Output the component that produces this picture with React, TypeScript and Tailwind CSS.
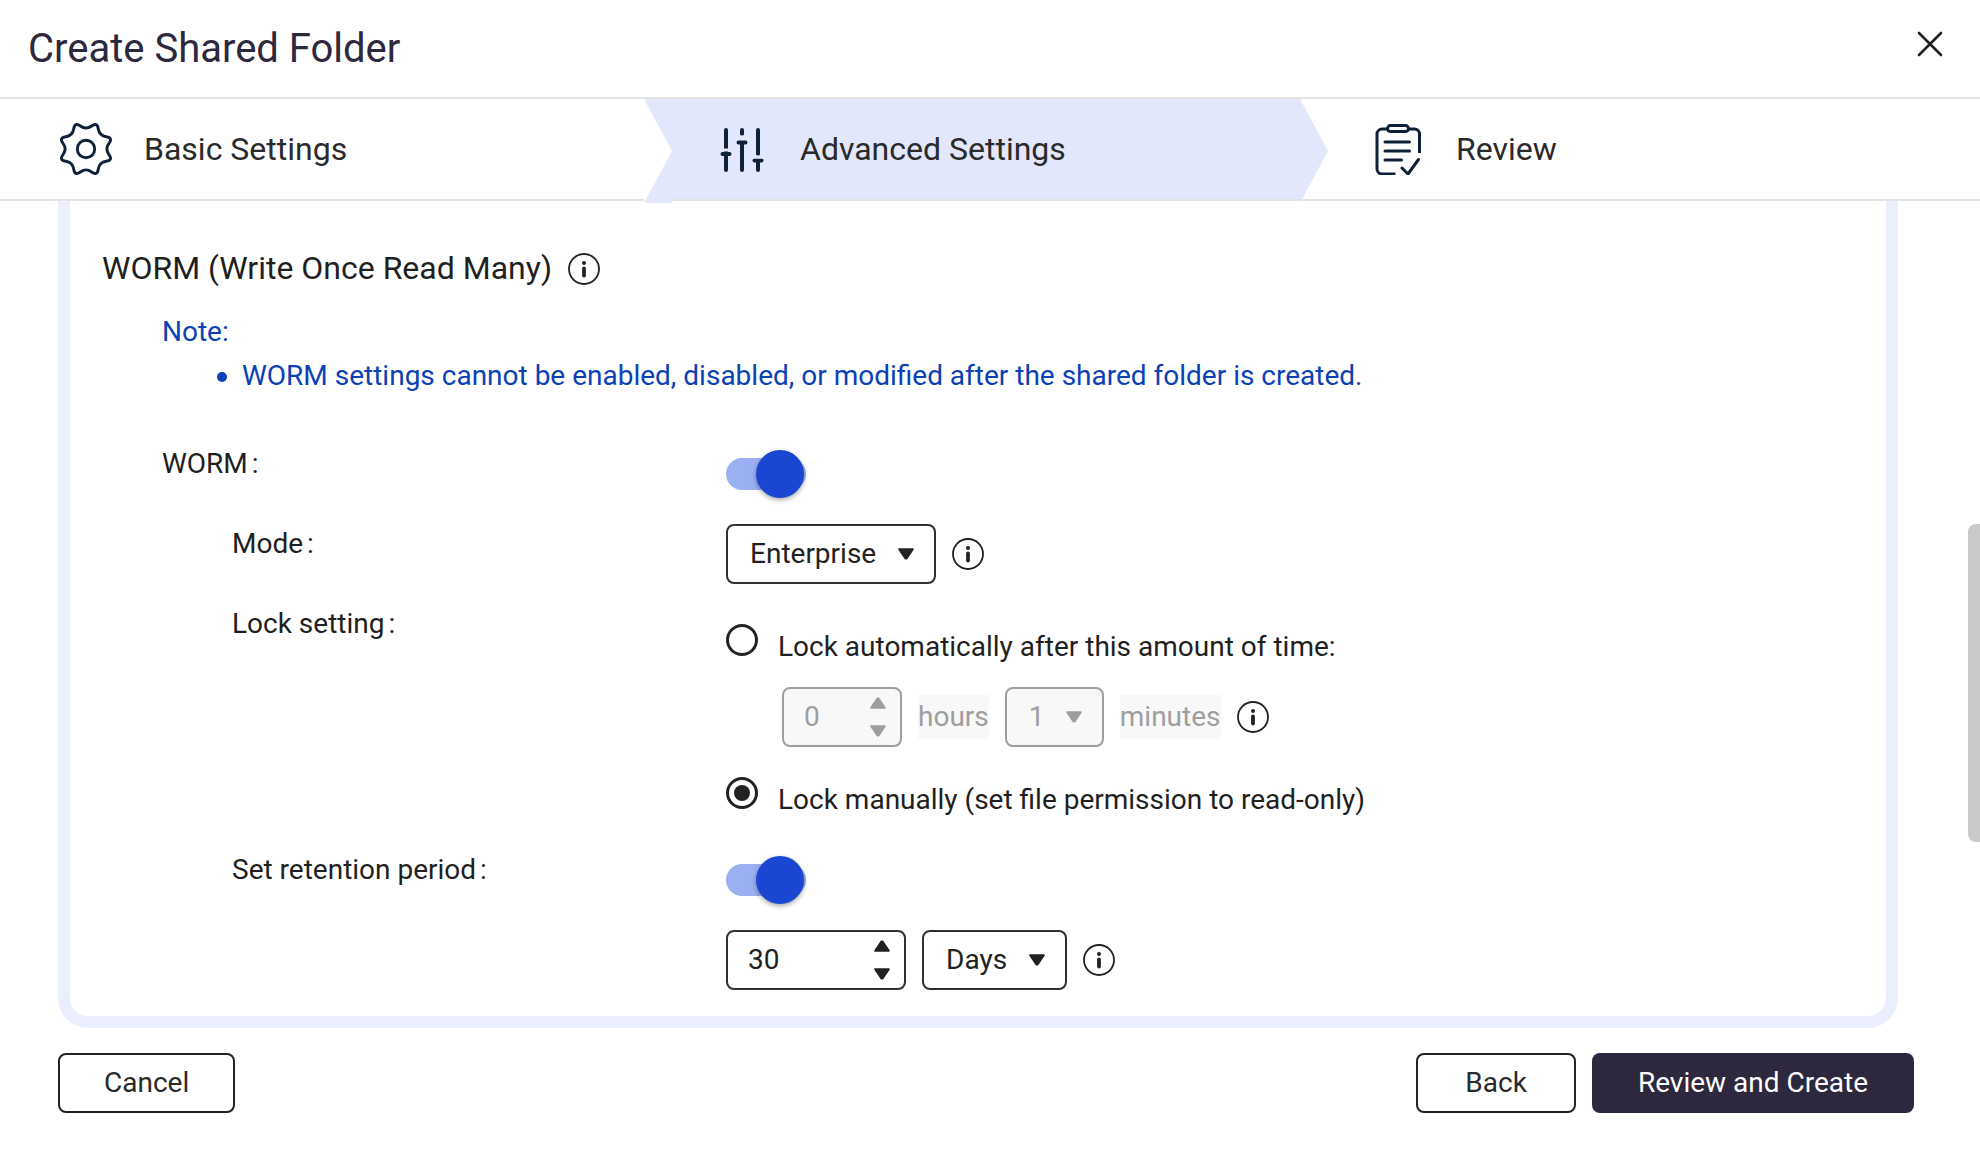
import { useState, type ReactNode } from "react";

const NAVY = "#0f2138";

function gearPath(cx: number, cy: number, outer: number, inner: number) {
  const points = Array.from({ length: 16 }, (_, i) => {
    const angle = (i * Math.PI) / 8;
    const radius = i % 2 ? outer : inner;
    return [cx + radius * Math.sin(angle), cy - radius * Math.cos(angle)];
  });
  const mid = (i: number) => {
    const a = points[i % 16];
    const b = points[(i + 1) % 16];
    return `${((a[0] + b[0]) / 2).toFixed(2)} ${((a[1] + b[1]) / 2).toFixed(2)}`;
  };
  let d = `M${mid(15)}`;
  points.forEach((p, i) => {
    d += `Q${p[0].toFixed(2)} ${p[1].toFixed(2)} ${mid(i)}`;
  });
  return d + "Z";
}

function GearIcon() {
  return (
    <svg aria-hidden="true" className="size-[52px]" viewBox="0 0 52 52" fill="none" stroke={NAVY} strokeWidth="2.9">
      <path d={gearPath(26, 26, 29.4, 18.8)} />
      <circle cx="26" cy="26" r="8.7" />
    </svg>
  );
}

function SlidersIcon() {
  return (
    <svg aria-hidden="true" className="size-[52px]" viewBox="0 -1 52 52" fill="none" stroke={NAVY} strokeWidth="4" strokeLinecap="round">
      <path d="M10 6v22" />
      <path d="M10 30v16M6.500 30h7" />
      <path d="M26 6v4M26 19v27M22.500 18.500h7" />
      <path d="M42 6v24M42 38v8M38.500 36.500h7" />
      <path d="M3 26h14M18 13h16M35 33h14" stroke="#e2e7fb" strokeWidth="3" strokeLinecap="butt" />
    </svg>
  );
}

function ClipboardIcon() {
  return (
    <svg
      aria-hidden="true"
      className="size-[52px]"
      viewBox="-2 0 52 52"
      fill="none"
      stroke={NAVY}
      strokeWidth="3"
      strokeLinejoin="round"
    >
      <path d="M14 6H8a5 5 0 0 0-5 5v35a5 5 0 0 0 5 5h13.500M34 6h6.500a5 5 0 0 1 5 5v19" />
      <rect x="13.500" y="2.600" width="21" height="6" rx="3" />
      <path d="M11 19H35.500M11 28H35.500M11 37h16.500M28 45l6 6L44.500 36.500" strokeLinecap="round" />
    </svg>
  );
}

function InfoButton({ label }: { label: string }) {
  return (
    <button type="button" aria-label={label} className="size-8 shrink-0 text-[#222222]">
      <svg aria-hidden="true" className="size-8" viewBox="0 0 32 32" fill="none" stroke="currentColor">
        <circle cx="16" cy="16" r="15" strokeWidth="1.8" />
        <path d="M16 15.500v7" strokeWidth="3.800" strokeLinecap="round" />
        <circle cx="16" cy="10" r="2" fill="currentColor" stroke="none" />
      </svg>
    </button>
  );
}

function Caret({ up = false }: { up?: boolean }) {
  return (
    <svg aria-hidden="true" className="h-3 w-4" viewBox="0 0 16 12" fill="currentColor" stroke="currentColor" strokeWidth="2" strokeLinejoin="round">
      <path d={up ? "M1.200 10.800h13.600L8.600 1.500h-1.200Z" : "M1.200 1.200h13.600L8.600 10.500h-1.200Z"} />
    </svg>
  );
}

function Dropdown({ label, options, width, disabled = false }: { label: string; options: string[]; width: string; disabled?: boolean }) {
  return (
    <div className={`relative ${width} ${disabled ? "text-[#9e9e9e]" : "text-[#222222]"}`}>
      <select
        aria-label={label}
        disabled={disabled}
        className="h-15 w-full appearance-none rounded-lg border-2 border-[#303030] bg-white pl-[22px] disabled:border-[#9e9e9e] disabled:bg-[#f8f8f8] disabled:opacity-100"
      >
        {options.map((option) => (
          <option key={option}>{option}</option>
        ))}
      </select>
      <span className="pointer-events-none absolute inset-y-0 right-[22px] flex items-center">
        <Caret />
      </span>
    </div>
  );
}

function NumberBox({ label, initial, width, disabled = false }: { label: string; initial: number; width: string; disabled?: boolean }) {
  const [value, setValue] = useState(initial);
  return (
    <div
      className={`flex h-15 rounded-lg border-2 ${width} ${
        disabled ? "border-[#9e9e9e] bg-[#f8f8f8] text-[#9e9e9e]" : "border-[#303030] bg-white text-[#222222]"
      }`}
    >
      <input
        type="text"
        inputMode="numeric"
        aria-label={label}
        disabled={disabled}
        value={value}
        onChange={(e) => setValue(Number(e.target.value) || 0)}
        className="w-full min-w-0 flex-1 bg-transparent pl-5 outline-none"
      />
      <div className="mr-3.5 flex flex-col justify-center gap-4">
        <button type="button" aria-label={`Increase ${label}`} disabled={disabled} onClick={() => setValue(value + 1)}>
          <Caret up />
        </button>
        <button type="button" aria-label={`Decrease ${label}`} disabled={disabled} onClick={() => setValue(Math.max(0, value - 1))}>
          <Caret />
        </button>
      </div>
    </div>
  );
}

function Toggle({ id }: { id: string }) {
  return (
    <span className="relative flex h-15 w-20 items-center">
      <input
        id={id}
        type="checkbox"
        role="switch"
        defaultChecked
        className="peer h-8 w-20 cursor-pointer appearance-none rounded-full bg-gray-300 checked:bg-[#9bb0f2]"
      />
      <span className="pointer-events-none absolute top-1.5 left-0 size-12 rounded-full bg-white shadow-[0_2px_5px_rgba(0,0,0,0.35)] peer-checked:left-[30px] peer-checked:bg-[#1a46d2]" />
    </span>
  );
}

function Radio({ id, label, checked, onSelect }: { id: string; label: string; checked: boolean; onSelect: () => void }) {
  return (
    <div className="flex items-start gap-5">
      <input
        id={id}
        type="radio"
        name="lock"
        checked={checked}
        onChange={onSelect}
        className="size-8 shrink-0 appearance-none rounded-full border-3 border-[#222222] bg-white bg-clip-content p-[5px] checked:bg-[#222222]"
      />
      <label htmlFor={id} className="leading-[46px]">
        {label}
      </label>
    </div>
  );
}

function Row({ label, htmlFor, indent = false, children }: { label: string; htmlFor?: string; indent?: boolean; children: ReactNode }) {
  const text = (
    <>
      {label}
      <span className="ml-1">:</span>
    </>
  );
  const style = `leading-10 ${indent ? "pl-[70px]" : ""}`;
  return (
    <div className="grid grid-cols-[564px_1fr] items-start">
      {htmlFor ? (
        <label htmlFor={htmlFor} className={style}>
          {text}
        </label>
      ) : (
        <div className={style}>{text}</div>
      )}
      <div>{children}</div>
    </div>
  );
}

function Step({ icon, label, className = "", current = false, children }: { icon: ReactNode; label: string; className?: string; current?: boolean; children?: ReactNode }) {
  return (
    <li className={`relative flex h-[100px] items-center ${className}`} aria-current={current ? "step" : undefined}>
      {children}
      <button type="button" className="relative flex items-center gap-8 text-[32px]">
        {icon}
        <span className="leading-10">{label}</span>
      </button>
    </li>
  );
}

export default function App() {
  const [lock, setLock] = useState("manual");

  return (
    <div className="relative flex min-h-screen flex-col bg-white font-['Roboto',sans-serif] text-[28px] text-[#1f1f1f]">
      <header className="flex h-[99px] items-center justify-between border-b-2 border-[#e3e3e3] pr-[37px] pl-7">
        <h1 className="text-[40px] leading-12 text-[#2d283e]">Create Shared Folder</h1>
        <button type="button" aria-label="Close" className="mb-2.5 text-[#222222]">
          <svg aria-hidden="true" className="size-[26px]" viewBox="0 0 26 26" fill="none" stroke="currentColor" strokeWidth="2.6" strokeLinecap="round">
            <path d="M2 2l22 22M24 2L2 24" />
          </svg>
        </button>
      </header>

      <nav aria-label="Steps" className="relative z-10 border-b-2 border-[#e3e3e3]">
        <ol className="grid grid-cols-[644fr_656fr_680fr] text-[#2a2a2a]">
          <Step icon={<GearIcon />} label="Basic Settings" className="pl-[60px]" />
          <Step icon={<SlidersIcon />} label="Advanced Settings" className="bg-[#e2e7fb] pl-[72px]" current>
            <svg aria-hidden="true" className="absolute top-0 left-0 h-[104px] w-7" viewBox="0 0 28 104">
              <path d="M0 0h28v104H0Z" fill="#e2e7fb" />
              <path d="M0 0L28 52L0 104Z" fill="#ffffff" />
            </svg>
          </Step>
          <Step icon={<ClipboardIcon />} label="Review" className="pl-[72px]">
            <svg aria-hidden="true" className="absolute top-0 left-0 h-[104px] w-7" viewBox="0 0 28 104">
              <path d="M0 0L28 52L0 104Z" fill="#e2e7fb" />
            </svg>
          </Step>
        </ol>
      </nav>

      <main className="mr-[82px] ml-[58px] rounded-b-[30px] border-x-12 border-b-12 border-[#ebeefc] px-8 pt-[50px] pb-[26px]">
        <div className="flex items-end gap-4">
          <h2 className="text-[32px] leading-[34px]">WORM (Write Once Read Many)</h2>
          <InfoButton label="About WORM" />
        </div>

        <div className="mt-[25px] pl-15">
          <div className="leading-11 text-[#0b41b5]">
            <p>Note:</p>
            <ul className="pl-20">
              <li className="relative">
                <span className="absolute top-[18px] -left-[25px] size-2.5 rounded-full bg-[#0b41b5]" />
                WORM settings cannot be enabled, disabled, or modified after the shared folder is created.
              </li>
            </ul>
          </div>

          <div className="mt-[46px] flex flex-col gap-5">
            <Row label="WORM" htmlFor="worm">
              <Toggle id="worm" />
            </Row>

            <Row label="Mode" indent>
              <div className="flex items-center gap-4">
                <Dropdown label="Mode" options={["Enterprise", "Compliance"]} width="w-[210px]" />
                <InfoButton label="About mode" />
              </div>
            </Row>

            <Row label="Lock setting" indent>
              <div className="pt-5 pb-[7px]">
                <Radio id="lock-auto" label="Lock automatically after this amount of time:" checked={lock === "auto"} onSelect={() => setLock("auto")} />
                <div className="mt-[17px] mb-[30px] flex items-center gap-4 pl-14">
                  <NumberBox label="hours" initial={0} width="w-[120px]" disabled={lock !== "auto"} />
                  <span className="bg-[#f8f8f8] leading-11 text-[#9e9e9e]">hours</span>
                  <Dropdown label="minutes" options={["1", "5", "10", "30"]} width="w-[99px]" disabled={lock !== "auto"} />
                  <span className="bg-[#f8f8f8] leading-11 text-[#9e9e9e]">minutes</span>
                  <InfoButton label="About automatic locking" />
                </div>
                <Radio id="lock-manual" label="Lock manually (set file permission to read-only)" checked={lock === "manual"} onSelect={() => setLock("manual")} />
              </div>
            </Row>

            <Row label="Set retention period" htmlFor="retention" indent>
              <Toggle id="retention" />
              <div className="mt-5 flex items-center gap-4">
                <NumberBox label="retention period" initial={30} width="w-[180px]" />
                <Dropdown label="Retention unit" options={["Days", "Months", "Years"]} width="w-[145px]" />
                <InfoButton label="About retention period" />
              </div>
            </Row>
          </div>
        </div>
      </main>

      <footer className="mt-[25px] flex gap-4 pr-[66px] pb-10 pl-[58px]">
        <button type="button" className="mr-auto h-15 rounded-lg border-2 border-[#222222] px-11 text-[#2a2a2a]">
          Cancel
        </button>
        <button type="button" className="h-15 rounded-lg border-2 border-[#222222] px-[47px] text-[#2a2a2a]">
          Back
        </button>
        <button type="button" className="h-15 rounded-lg bg-[#2d283e] px-[46px] text-white">
          Review and Create
        </button>
      </footer>

      <div className="absolute top-[524px] right-0 h-[318px] w-3 rounded-l-lg bg-[#c9c9c9]" />
    </div>
  );
}
